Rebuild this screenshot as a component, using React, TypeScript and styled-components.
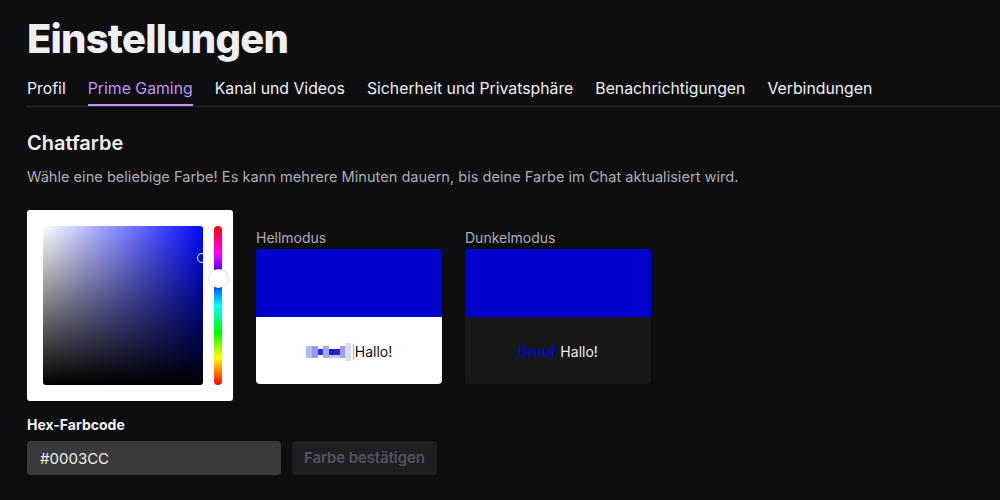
import React from 'react'
import styled, { createGlobalStyle } from 'styled-components'

const GlobalStyle = createGlobalStyle`
    html, body {
        margin: 0;
        padding: 0;
        background: #0e0e10;
        color: #efeff1;
        font-family: Inter, "Noto Sans", sans-serif;
    }
`

const tabs = ['Profil', 'Prime Gaming', 'Kanal und Videos', 'Sicherheit und Privatsphäre', 'Benachrichtigungen', 'Verbindungen']

const pixels = [
    { x: 0, y: 3, w: 6, h: 12, c: '#b6b6f0' },
    { x: 6, y: 3, w: 6, h: 12, c: '#9a9aea' },
    { x: 12, y: 6, w: 5, h: 6, c: '#2e2ed6' },
    { x: 17, y: 3, w: 6, h: 12, c: '#a8a8ee' },
    { x: 23, y: 6, w: 5, h: 6, c: '#1a1acf' },
    { x: 28, y: 6, w: 6, h: 6, c: '#2424d3' },
    { x: 34, y: 3, w: 5, h: 12, c: '#9c9ceb' },
    { x: 39, y: 0, w: 6, h: 18, c: '#dcdcf7' },
    { x: 23, y: 12, w: 11, h: 3, c: '#c4c4f2' },
]

export default function App() {
    return (
        <Page>
            <GlobalStyle />
            <Title>Einstellungen</Title>
            <TabBar>
                {tabs.map((t) => (
                    <Tab key={t} active={t === 'Prime Gaming'}>{t}</Tab>
                ))}
            </TabBar>
            <Section>
                <Heading>Chatfarbe</Heading>
                <Description>
                    Wähle eine beliebige Farbe! Es kann mehrere Minuten dauern, bis deine Farbe im Chat aktualisiert wird.
                </Description>
                <PickerRow>
                    <Picker>
                        <SatArea>
                            <SatCursor />
                        </SatArea>
                        <HueBar>
                            <HueThumb />
                        </HueBar>
                    </Picker>
                    <Preview>
                        <PreviewLabel>Hellmodus</PreviewLabel>
                        <Card>
                            <Swatch />
                            <CardBody dark={false}>
                                <svg width="45" height="18" viewBox="0 0 45 18">
                                    {pixels.map((p, i) => (
                                        <rect key={i} x={p.x} y={p.y} width={p.w} height={p.h} fill={p.c} />
                                    ))}
                                </svg>
                                <Caret />
                                <span>Hallo!</span>
                            </CardBody>
                        </Card>
                    </Preview>
                    <Preview>
                        <PreviewLabel>Dunkelmodus</PreviewLabel>
                        <Card>
                            <Swatch />
                            <CardBody dark>
                                <UserName>Druuf</UserName>
                                <span>&nbsp;Hallo!</span>
                            </CardBody>
                        </Card>
                    </Preview>
                </PickerRow>
                <FieldLabel>Hex-Farbcode</FieldLabel>
                <FieldRow>
                    <HexInput defaultValue="#0003CC" />
                    <ConfirmButton disabled>Farbe bestätigen</ConfirmButton>
                </FieldRow>
            </Section>
        </Page>
    )
}

const Page = styled.div`
    width: 1000px;
    height: 500px;
    overflow: hidden;
    padding-left: 27px;
    box-sizing: border-box;
`

const Title = styled.h1`
    margin: 0;
    padding-top: 13px;
    font-size: 40px;
    font-weight: 800;
    letter-spacing: -0.8px;
    line-height: 52px;
    color: #efeff1;
`

const TabBar = styled.div`
    display: flex;
    gap: 22px;
    margin-top: 14px;
    border-bottom: 1px solid #2a2a2e;
`

const Tab = styled.div<{ active: boolean }>`
    font-size: 15.8px;
    line-height: 20px;
    padding-bottom: 7px;
    color: ${(p) => (p.active ? '#bf94ff' : '#efeff1')};
    box-shadow: ${(p) => (p.active ? 'inset 0 -2px 0 #bf94ff' : 'none')};
`

const Section = styled.div`
    padding-top: 24px;
`

const Heading = styled.h2`
    margin: 0;
    font-size: 20px;
    font-weight: 600;
    line-height: 24px;
`

const Description = styled.p`
    margin: 12px 0 0;
    font-size: 14.6px;
    line-height: 20px;
    color: #adadb8;
`

const PickerRow = styled.div`
    display: flex;
    align-items: flex-start;
    margin-top: 23px;
`

const Picker = styled.div`
    display: flex;
    flex-shrink: 0;
    gap: 11px;
    width: 206px;
    height: 191px;
    padding: 16px 11px 16px 16px;
    box-sizing: border-box;
    background: #fff;
    border-radius: 3px;
`

const SatArea = styled.div`
    position: relative;
    flex-shrink: 0;
    width: 160px;
    height: 159px;
    border-radius: 3px;
    background: linear-gradient(to bottom, rgba(0, 0, 0, 0), #000),
        linear-gradient(to right, #fff, rgba(255, 255, 255, 0)), #0008ff;
`

const SatCursor = styled.div`
    position: absolute;
    left: 154px;
    top: 27px;
    width: 10px;
    height: 10px;
    border: 1.5px solid #fff;
    border-radius: 50%;
    box-sizing: border-box;
`

const HueBar = styled.div`
    position: relative;
    flex-shrink: 0;
    width: 8px;
    height: 159px;
    border-radius: 5px;
    background: linear-gradient(to bottom, #f00, #f0f 17%, #00f 33%, #0ff 50%, #0f0 67%, #ff0 83%, #f00);
`

const HueThumb = styled.div`
    position: absolute;
    left: -5.5px;
    top: 43px;
    width: 19px;
    height: 19px;
    border-radius: 50%;
    background: #fff;
    box-shadow: 0 0 2px rgba(0, 0, 0, 0.35);
`

const Preview = styled.div`
    display: flex;
    flex-direction: column;
    margin-left: 23px;
    margin-top: 19px;
`

const PreviewLabel = styled.div`
    font-size: 14px;
    line-height: 18px;
    color: #adadb8;
    margin-bottom: 2px;
`

const Card = styled.div`
    width: 186px;
    border-radius: 4px;
    overflow: hidden;
`

const Swatch = styled.div`
    height: 68px;
    background: #0003cc;
`

const CardBody = styled.div<{ dark: boolean }>`
    display: flex;
    align-items: center;
    justify-content: center;
    height: 67px;
    padding-top: 2px;
    box-sizing: border-box;
    font-size: 14px;
    background: ${(p) => (p.dark ? '#18181b' : '#fff')};
    color: ${(p) => (p.dark ? '#efeff1' : '#0e0e10')};
`

const Caret = styled.span`
    width: 1px;
    height: 16px;
    background: #b0b0b8;
    margin: 0 1px 0 2px;
`

const UserName = styled.span`
    color: #0003cc;
    font-weight: 600;
`

const FieldLabel = styled.div`
    margin-top: 15px;
    font-size: 14px;
    font-weight: 700;
    line-height: 18px;
`

const FieldRow = styled.div`
    display: flex;
    gap: 11px;
    margin-top: 7px;
`

const HexInput = styled.input`
    width: 254px;
    height: 34px;
    box-sizing: border-box;
    padding: 0 13px;
    border: none;
    border-radius: 4px;
    background: #3a3a3d;
    color: #efeff1;
    font-family: Inter, sans-serif;
    font-size: 15px;
    outline: none;
`

const ConfirmButton = styled.button`
    height: 34px;
    padding: 0 12px;
    border: none;
    border-radius: 4px;
    background: #1f1f23;
    color: #53535f;
    font-family: Inter, sans-serif;
    font-size: 14.8px;
    font-weight: 600;
`
